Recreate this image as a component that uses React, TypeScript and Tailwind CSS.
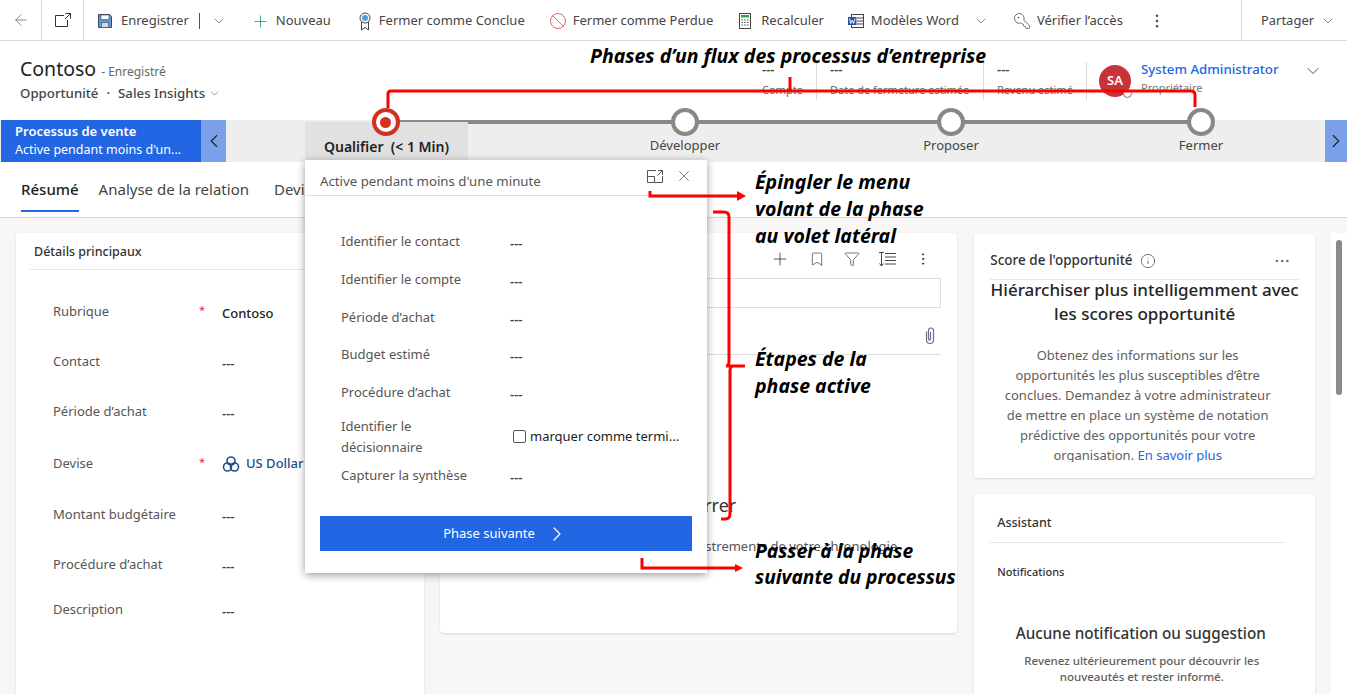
import { ArrowLeft, Ban, Bookmark, ChevronDown, ChevronLeft, ChevronRight, Ellipsis, EllipsisVertical, Funnel, Info, KeyRound, Plus, X } from 'lucide-react';

const detailRows = [
  { label: 'Rubrique', value: 'Contoso', required: true, height: 'h-[50px]' },
  { label: 'Contact', value: '---', height: 'h-[50px]' },
  { label: 'Période d’achat', value: '---', height: 'h-[52px]' },
  { label: 'Devise', value: 'US Dollar', required: true, link: true, height: 'h-[51px]' },
  { label: 'Montant budgétaire', value: '---', height: 'h-[50px]' },
  { label: 'Procédure d’achat', value: '---', height: 'h-[45px]' },
  { label: 'Description', value: '---', height: 'h-[50px]' }
];

const stepRows = [
  { label: 'Identifier le contact', height: 'h-[38px]' },
  { label: 'Identifier le compte', height: 'h-[38px]' },
  { label: 'Période d’achat', height: 'h-[37px]' },
  { label: 'Budget estimé', height: 'h-[38px]' },
  { label: 'Procédure d’achat', height: 'h-[29px]' }
];

const headerFields = [
  { label: 'Compte', box: 'w-[56px] pl-[1px]' },
  { label: 'Date de fermeture estimée', box: 'w-[167px] pl-[13px]' },
  { label: 'Revenu estimé', box: 'w-[103px] pl-[13px]' }
];

const stages = [
  { name: 'Développer', margin: 'ml-[137px]' },
  { name: 'Proposer', margin: 'ml-[106px]' },
  { name: 'Fermer', margin: 'ml-[90px]' }
];

const SaveIcon = () => (
  <svg width="14" height="14" viewBox="0 0 14 14">
    <path d="M0.5 0.5h11l2 2v11h-13z" fill="#5b9bd5" stroke="#3b4a5a" />
    <rect x="3" y="1" width="8" height="4.5" fill="#fff" stroke="#3b4a5a" strokeWidth="0.6" />
    <rect x="3.5" y="8.5" width="7" height="5" fill="#d9d9d9" stroke="#3b4a5a" strokeWidth="0.6" />
  </svg>
);

const PopoutIcon = () => (
  <svg width="16" height="14" viewBox="0 0 16 14" fill="none" stroke="#333" strokeWidth="1">
    <path d="M9 2.5H0.5V13.5H12.5V7" />
    <path d="M10.5 0.5H15.5V5.5M15.5 0.5L10 6" />
  </svg>
);

const PinIcon = () => (
  <svg width="16" height="13" viewBox="0 0 16 13" fill="none" stroke="#555" strokeWidth="1">
    <path d="M9 0.5H0.5V12.5H15.5V6" />
    <path d="M0.5 6.5H7.5V12.5" />
    <path d="M11 0.5H15.5V5M15.5 0.5L10.5 5.5" />
  </svg>
);

const RibbonIcon = () => (
  <svg width="12" height="19" viewBox="0 0 12 19" fill="none">
    <path d="M2.5 10V18L6 15.5L9.5 18V10" stroke="#444" />
    <circle cx="6" cy="6" r="5" fill="#fff" stroke="#444" />
    <circle cx="6" cy="6" r="3" fill="#5b9bd5" />
  </svg>
);

const CalcIcon = () => (
  <svg width="12" height="16" viewBox="0 0 12 16" fill="none">
    <rect x="0.5" y="0.5" width="11" height="15" stroke="#444" />
    <rect x="2" y="2" width="8" height="2.5" fill="#33a852" />
    <path d="M2.5 7h1.5M5.2 7h1.5M8 7h1.5M2.5 9.5h1.5M5.2 9.5h1.5M8 9.5h1.5M2.5 12h1.5M5.2 12h1.5M8 12h1.5" stroke="#444" />
  </svg>
);

const WordIcon = () => (
  <svg width="16" height="14" viewBox="0 0 16 14" fill="none">
    <rect x="3.5" y="0.5" width="12" height="13" stroke="#444" />
    <path d="M9 4H15M9 7H15M9 10H15" stroke="#444" />
    <rect x="0" y="3" width="8.5" height="8" fill="#2b579a" />
    <path d="M1.5 4.5L2.8 9.5L4.2 6L5.6 9.5L7 4.5" stroke="#fff" strokeWidth="0.9" />
  </svg>
);

const SortIcon = () => (
  <svg width="17" height="15" viewBox="0 0 17 15" fill="none" stroke="#444">
    <path d="M6 1.5H17M6 5H17M6 8.5H17M6 12H17M0 0.5H5" />
    <path d="M2.5 1V14M0.5 11.5L2.5 14L4.5 11.5" />
  </svg>
);

const ClipIcon = () => (
  <svg width="12" height="18" viewBox="0 0 12 18" fill="none" stroke="#75698f" strokeWidth="1.2">
    <path d="M2.5 4.5V13a3.5 3.5 0 0 0 7 0V3.5a2.5 2.5 0 0 0-5 0V12a1 1 0 0 0 2 0V5" />
  </svg>
);

const CurrencyIcon = () => (
  <svg width="18" height="18" viewBox="0 0 18 18" fill="none" stroke="#1d4f91" strokeWidth="1.6">
    <circle cx="9" cy="6" r="4" />
    <circle cx="5.5" cy="12" r="4" />
    <circle cx="12.5" cy="12" r="4" />
  </svg>
);

const Dashes = () => <span className="text-[13px] leading-none font-semibold text-[#444]">---</span>;

const StageDot = ({ active }: { active?: boolean }) =>
  active ? (
    <div className="flex h-[28px] w-[28px] items-center justify-center rounded-full border-[4px] border-[#d0321f] bg-white">
      <div className="h-[11px] w-[11px] rounded-full bg-[#d0321f]" />
    </div>
  ) : (
    <div className="h-[28px] w-[28px] rounded-full border-[4px] border-[#8a8886] bg-white" />
  );

const App = () => {
  return (
    <div className="relative h-[694px] w-[1347px] overflow-hidden bg-white font-['Noto_Sans',sans-serif] text-[#333]">
      {/* Command bar */}
      <div className="flex h-[41px] items-center border-b border-[#d8d8d8] pt-[2px] text-[13px] text-[#444]">
        <div className="-mt-[2px] flex h-[40px] w-[42px] items-center justify-center border-r border-[#d8d8d8]">
          <ArrowLeft size={18} strokeWidth={1} color="#666" />
        </div>
        <div className="-mt-[2px] flex h-[40px] w-[42px] items-center justify-center border-r border-[#d8d8d8]">
          <PopoutIcon />
        </div>
        <div className="ml-[14px]"><SaveIcon /></div>
        <span className="ml-[9px]">Enregistrer</span>
        <div className="ml-[10px] h-[16px] w-px bg-[#555]" />
        <ChevronDown className="ml-[11px]" size={16} strokeWidth={1} />
        <Plus className="ml-[24px]" size={19} strokeWidth={1.2} color="#3aa76d" />
        <span className="ml-[6px]">Nouveau</span>
        <div className="ml-[28px]"><RibbonIcon /></div>
        <span className="ml-[8px]">Fermer comme Conclue</span>
        <Ban className="ml-[24px]" size={18} strokeWidth={1.2} color="#e8505b" />
        <span className="ml-[6px]">Fermer comme Perdue</span>
        <div className="ml-[26px]"><CalcIcon /></div>
        <span className="ml-[10px]">Recalculer</span>
        <div className="ml-[24px]"><WordIcon /></div>
        <span className="ml-[7px]">Modèles Word</span>
        <ChevronDown className="ml-[14px]" size={16} strokeWidth={1} />
        <KeyRound className="ml-[24px] -scale-x-100" size={18} strokeWidth={1} />
        <span className="ml-[6px]">Vérifier l’accès</span>
        <EllipsisVertical className="ml-[25px]" size={18} strokeWidth={1.4} />
        <div className="-mt-[2px] ml-[75px] flex h-[40px] items-center border-l border-[#d8d8d8] pl-[19px] pt-[2px]">
          <span>Partager</span>
          <ChevronDown className="ml-[6px]" size={16} strokeWidth={1} />
        </div>
      </div>

      {/* Record header */}
      <div className="flex h-[79px]">
        <div className="w-[761px] pl-[20px] pt-[15px]">
          <div className="flex items-baseline">
            <span className="text-[19.5px] leading-[26px] text-[#222]">Contoso</span>
            <span className="ml-[5px] text-[12px] text-[#666]">- Enregistré</span>
          </div>
          <div className="mt-[2px] flex items-center text-[13.25px] font-medium text-[#444]">
            <span>Opportunité</span>
            <span className="mx-[8px]">·</span>
            <span>Sales Insights</span>
            <ChevronDown className="ml-[3px]" size={13} strokeWidth={1} />
          </div>
        </div>
        <div className="mt-[21px] flex h-[38px] self-start">
          {headerFields.map((field) => (
            <div key={field.label} className={`${field.box} whitespace-nowrap border-r border-[#d8d8d8] text-[11px] text-[#666]`}>
              <div className="h-[18px] text-[13px] leading-[14px] font-semibold text-[#444]">---</div>
              <div className="leading-[20px]">{field.label}</div>
            </div>
          ))}
        </div>
        <div className="relative ml-[12px] mt-[24px] flex h-[32px] w-[32px] items-center justify-center rounded-full bg-[#c8323a] text-[13px] font-semibold text-white">
          SA
          <div className="absolute -bottom-[1px] -right-[1px] h-[9px] w-[9px] rounded-full border border-[#777] bg-white" />
        </div>
        <div className="ml-[10px] mt-[19px]">
          <div className="text-[13.25px] leading-[18px] font-medium text-[#2266e3]">System Administrator</div>
          <div className="text-[11px] leading-[20px] text-[#777]">Propriétaire</div>
        </div>
        <ChevronDown className="ml-[24px] mt-[20px]" size={20} strokeWidth={1} />
      </div>

      {/* Process bar */}
      <div className="relative flex h-[42px] bg-[#eeeeee]">
        <div className="ml-[1px] flex h-full w-[200px] flex-col justify-center bg-[#2266e3] pl-[14px] text-white">
          <div className="text-[13px] leading-[17px] font-semibold">Processus de vente</div>
          <div className="text-[12.5px] leading-[19px]">Active pendant moins d'un...</div>
        </div>
        <div className="flex h-full w-[25px] items-center justify-center bg-[#7aa0ea]">
          <ChevronLeft size={22} strokeWidth={1.2} color="#222" />
        </div>
        <div className="relative flex flex-1">
          <div className="absolute left-[160px] top-0 h-[4px] w-[815px] bg-[#8a8886]" />
          <div className="relative ml-[79px] mt-[2px] flex h-[38px] w-[163px] flex-col items-center bg-[#e1e1e1]">
            <div className="-mt-[14px] -ml-[2px]"><StageDot active /></div>
            <span className="whitespace-pre text-[14px] font-semibold text-[#222]">Qualifier  (&lt; 1 Min)</span>
          </div>
          {stages.map((stage) => (
            <div key={stage.name} className={`relative ${stage.margin} flex w-[160px] flex-col items-center`}>
              <div className="-mt-[12px]"><StageDot /></div>
              <span className="text-[13px] text-[#444]">{stage.name}</span>
            </div>
          ))}
        </div>
        <div className="absolute right-0 top-0 flex h-full w-[22px] items-center justify-center bg-[#7aa0ea]">
          <ChevronRight size={22} strokeWidth={1.2} color="#222" />
        </div>
      </div>

      {/* Tabs */}
      <div className="flex h-[56px] border-b border-[#d8d8d8] pl-[21px] pt-[16px] text-[15px] text-[#444]">
        <div className="h-[34px] border-b-2 border-[#2266e3] font-medium text-[#222]">Résumé</div>
        <div className="ml-[20px]">Analyse de la relation</div>
        <div className="ml-[25px]">Devis</div>
      </div>

      {/* Form body */}
      <div className="flex h-[476px] bg-[#f8f7f6] pl-[16px] pt-[15px]">
        <div className="h-[600px] w-[408px] rounded-t bg-white pl-[14px] shadow-sm">
          <div className="mr-[14px] h-[37px] border-b border-[#e6e6e6] pl-[4px] pt-[10px] text-[12.5px] font-medium text-[#333]">
            Détails principaux
          </div>
          <div className="pt-[32px]">
            {detailRows.map((row) => (
              <div key={row.label} className={`flex ${row.height} pl-[23px] text-[13px] text-[#555]`}>
                <span className="w-[146px]">{row.label}</span>
                <span className="w-[23px] text-[11px] text-[#d13438]">{row.required ? '*' : ''}</span>
                {row.link ? (
                  <span className="flex items-center gap-[6px] self-start font-medium text-[#1d4f91]">
                    <CurrencyIcon />
                    {row.value}
                  </span>
                ) : row.value === '---' ? (
                  <span className="mt-[2px]"><Dashes /></span>
                ) : (
                  <span className="mt-[2px] font-medium text-[#222]">{row.value}</span>
                )}
              </div>
            ))}
          </div>
        </div>

        <div className="ml-[16px] h-[400px] w-[518px] rounded bg-white pr-[16px] shadow-sm">
          <div className="flex h-[45px] items-center justify-end gap-[19px] pr-[10px] pt-[7px]">
            <Plus size={20} strokeWidth={1} />
            <Bookmark size={16} strokeWidth={1} />
            <Funnel size={16} strokeWidth={1} />
            <SortIcon />
            <EllipsisVertical size={16} strokeWidth={1.4} />
          </div>
          <div className="h-[30px] border border-[#dddddd]" />
          <div className="flex h-[47px] items-center justify-end border-b border-[#dddddd] pr-[5px] pt-[10px]">
            <ClipIcon />
          </div>
          <div className="mt-[137px] flex justify-end pr-[205px] text-[18px] text-[#333]">Prêt à démarrer</div>
          <div className="mt-[18px] flex justify-end pr-[44px] text-[13px] leading-[18px] text-[#555]">Capturez les enregistrements de votre chronologie</div>
        </div>

        <div className="ml-[17px] mt-[1px] w-[341px]">
          <div className="h-[244px] overflow-hidden rounded bg-white px-[16px] shadow-sm">
            <div className="flex h-[46px] items-center border-b border-[#e6e6e6] pt-[8px] text-[13.5px] font-medium text-[#333]">
              <span>Score de l'opportunité</span>
              <Info className="ml-[7px]" size={16} strokeWidth={1} />
              <Ellipsis className="ml-auto mr-[8px]" size={18} strokeWidth={1} />
            </div>
            <div className="-mt-[2px] text-center text-[17px] leading-[24px] font-medium text-[#242424]">
              Hiérarchiser plus intelligemment avec les scores opportunité
            </div>
            <div className="mt-[19px] h-[117px] overflow-hidden pl-[7px] pr-[21px] text-center text-[13px] leading-[20px] text-[#605e5c]">
              Obtenez des informations sur les opportunités les plus susceptibles d’être conclues. Demandez à votre administrateur de mettre en place un système de notation prédictive des opportunités pour votre organisation. <span className="text-[#2266e3]">En savoir plus</span>
            </div>
          </div>
          <div className="mt-[16px] h-[300px] rounded bg-white shadow-sm">
            <div className="mx-[16px] h-[49px] w-[295px] border-b border-[#e6e6e6] pl-[7px] pt-[20px] text-[12.5px] font-medium text-[#333]">Assistant</div>
            <div className="ml-[23px] mt-[21px] text-[11px] font-medium text-[#333]">Notifications</div>
            <div className="mt-[41px] w-[333px] text-center text-[15.25px] font-medium text-[#333]">Aucune notification ou suggestion</div>
            <div className="mt-[9px] w-[335px] px-[30px] text-center text-[11.5px] leading-[16px] font-medium text-[#605e5c]">
              Revenez ultérieurement pour découvrir les nouveautés et rester informé.
            </div>
          </div>
        </div>

        <div className="ml-[16px] h-full w-[16px] bg-white pt-[7px]">
          <div className="ml-[5px] h-[155px] w-[6px] rounded bg-[#8a8a8a]" />
        </div>
      </div>

      {/* Stage flyout */}
      <div className="absolute left-[305px] top-[160px] h-[413px] w-[402px] bg-white shadow-[0_2px_8px_rgba(0,0,0,0.4)]">
        <div className="relative mr-[16px] flex h-[36px] items-center border-b border-[#dddddd] pl-[15px] pt-[9px] text-[13.25px] text-[#555]">
          Active pendant moins d'une minute
          <div className="absolute right-[28px] top-[10px]"><PinIcon /></div>
          <X className="absolute -right-[2px] top-[7px]" size={18} strokeWidth={1} />
        </div>
        <div className="pl-[36px] pt-[36px] text-[13px] text-[#555]">
          {stepRows.map((step) => (
            <div key={step.label} className={`flex ${step.height}`}>
              <span className="w-[169px]">{step.label}</span>
              <span className="mt-[2px]"><Dashes /></span>
            </div>
          ))}
          <div className="flex h-[49px] items-center leading-[21px]">
            <span className="w-[172px]">Identifier le<br />décisionnaire</span>
            <div className="h-[13px] w-[13px] rounded-[2px] border border-[#555]" />
            <span className="ml-[4px] text-[#222]">marquer comme termi...</span>
          </div>
          <div className="flex h-[55px] pt-[5px]">
            <span className="w-[169px]">Capturer la synthèse</span>
            <span className="mt-[2px]"><Dashes /></span>
          </div>
        </div>
        <div className="ml-[15px] flex h-[35px] w-[372px] items-center justify-center bg-[#2266e3] text-[13px] text-white">
          Phase suivante
          <ChevronRight className="ml-[10px]" size={24} strokeWidth={1.2} />
        </div>
      </div>

      {/* Callout lines */}
      <svg className="absolute left-0 top-0 h-[694px] w-[1347px]" fill="none" stroke="#ff0000" strokeWidth="3">
        <path d="M388 108V94Q388 91 391 91H1191Q1195 91 1195 95V107" />
        <path d="M790 91V77" />
        <path d="M650 191V196H737" />
        <path d="M737 191L746 196L737 201" fill="#ff0000" stroke="none" />
        <path d="M713 212H724Q729 212 729 217V361Q729 366 726 366H745M745 366H733Q730 366 730 371V514Q730 519 725 519H721" />
        <path d="M642 558V568H735" />
        <path d="M735 564L743 568L735 572" fill="#ff0000" stroke="none" />
      </svg>

      {/* Callout labels */}
      <div className="absolute left-[590px] top-[42px] text-[19.5px] leading-[28px] font-bold italic whitespace-nowrap text-black">Phases d’un flux des processus d’entreprise</div>
      <div className="absolute left-[755px] top-[168px] text-[19.5px] leading-[27px] font-bold italic text-black">Épingler le menu<br />volant de la phase<br />au volet latéral</div>
      <div className="absolute left-[755px] top-[345px] text-[19.5px] leading-[27px] font-bold italic text-black">Étapes de la<br />phase active</div>
      <div className="absolute left-[755px] top-[538px] text-[19.25px] leading-[26px] font-bold italic whitespace-nowrap text-black">Passer à la phase<br />suivante du processus</div>
    </div>
  );
};

export default App;
